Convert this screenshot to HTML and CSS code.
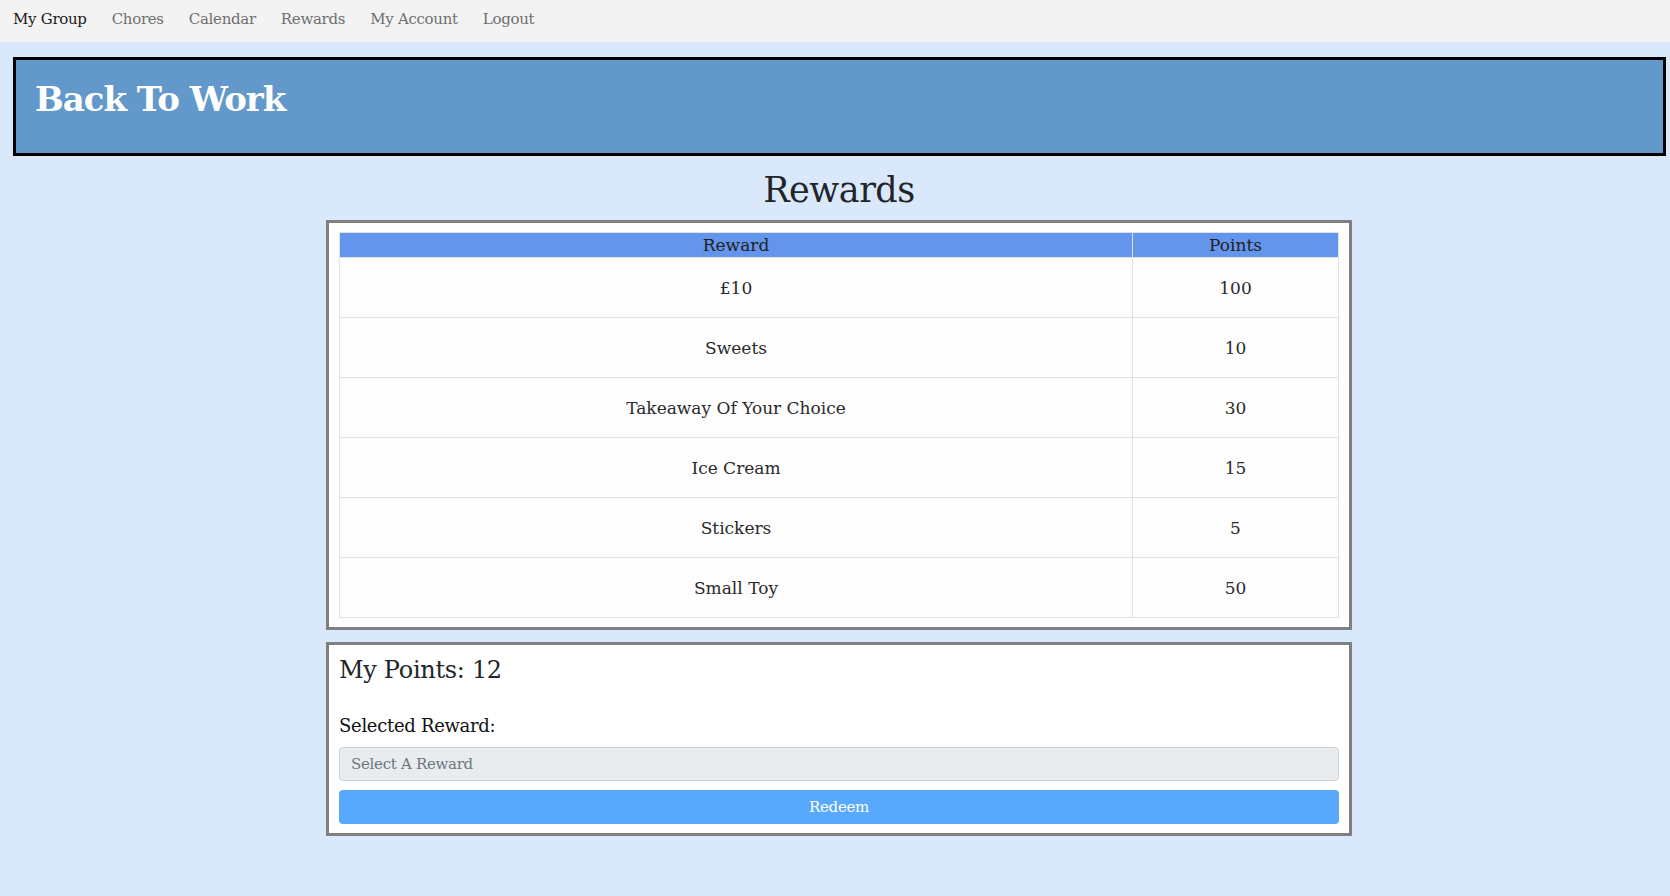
FILE: index.html
```html
<!DOCTYPE html>
<html lang="en">
<head>
<meta charset="utf-8">
<title>Rewards</title>
<link rel="stylesheet" href="styles.css">
</head>
<body>
<nav class="nav">
  <a class="nav-link active" href="#">My Group</a>
  <a class="nav-link" href="#">Chores</a>
  <a class="nav-link" href="#">Calendar</a>
  <a class="nav-link" href="#">Rewards</a>
  <a class="nav-link" href="#">My Account</a>
  <a class="nav-link" href="#">Logout</a>
</nav>
<header class="banner">
  <h1 class="banner-title">Back To Work</h1>
</header>
<main class="main">
  <h1 class="page-title">Rewards</h1>
  <section class="panel">
    <table class="rewards">
      <thead>
        <tr><th class="col-reward">Reward</th><th class="col-points">Points</th></tr>
      </thead>
      <tbody>
        <tr><td>£10</td><td>100</td></tr>
        <tr><td>Sweets</td><td>10</td></tr>
        <tr><td>Takeaway Of Your Choice</td><td>30</td></tr>
        <tr><td>Ice Cream</td><td>15</td></tr>
        <tr><td>Stickers</td><td>5</td></tr>
        <tr><td>Small Toy</td><td>50</td></tr>
      </tbody>
    </table>
  </section>
  <section class="panel redeem">
    <h3 class="points">My Points: 12</h3>
    <label class="field-label">Selected Reward:</label>
    <div class="select">Select A Reward</div>
    <button class="btn">Redeem</button>
  </section>
</main>
</body>
</html>
```
FILE: styles.css
```css
* { box-sizing: border-box; }
html, body { margin: 0; padding: 0; }
body {
  background: #dae8fb;
  font-family: "DejaVu Serif", "Liberation Serif", serif;
  color: #212529;
  width: 1670px;
  height: 896px;
  overflow: hidden;
}
.nav {
  background: #f3f3f3;
  height: 42px;
  display: flex;
  align-items: center;
  padding-left: 13px;
  padding-bottom: 4px;
  gap: 25px;
}
.nav-link {
  font-size: 15px;
  color: #6f6f6f;
  text-decoration: none;
  letter-spacing: -0.3px;
}
.nav-link.active { color: #1a1a1a; }
.banner {
  margin: 15px 4px 0 13px;
  height: 99px;
  background: #6399ca;
  border: 3px solid #000;
  padding: 19px 19px;
}
.banner-title {
  margin: 0;
  color: #fff;
  font-size: 34px;
  font-weight: 700;
  line-height: 1.2;
  letter-spacing: -1px;
}
.main {
  padding-left: 8px;
}
.page-title {
  margin: 12px 0 7px;
  text-align: center;
  font-size: 35px;
  font-weight: 400;
  line-height: 45px;
  letter-spacing: -0.5px;
}
.panel {
  width: 1026px;
  margin: 0 auto;
  background: #fff;
  border: 3px solid #808080;
  padding: 9px 10px;
}
.rewards {
  width: 100%;
  border-collapse: collapse;
}
.rewards th {
  background: #6495ed;
  font-weight: 400;
  font-size: 17px;
  height: 25px;
  padding: 0;
  border: 1px solid #dee2e6;
  text-align: center;
  color: #222;
}
.rewards .col-reward { width: 793px; }
.rewards td {
  height: 60px;
  text-align: center;
  font-size: 17px;
  border: 1px solid #dee2e6;
  background: #fdfdfe;
  color: #2a2a2a;
  padding: 0;
}
.redeem {
  margin-top: 12px;
  padding: 10px 10px 9px;
}
.points {
  margin: 0 0 29px;
  font-size: 24px;
  font-weight: 400;
  line-height: 30px;
  letter-spacing: -0.3px;
}
.field-label {
  display: block;
  font-size: 18px;
  line-height: 24px;
  margin-bottom: 9px;
  letter-spacing: -0.3px;
  color: #111;
}
.select {
  height: 34px;
  background: #e9ecef;
  border: 1px solid #ced4da;
  border-radius: 4px;
  padding: 0 11px;
  display: flex;
  align-items: center;
  color: #6c757d;
  font-size: 15px;
  letter-spacing: -0.3px;
}
.btn {
  display: block;
  width: 100%;
  height: 34px;
  margin-top: 9px;
  background: #58a9fe;
  border: none;
  border-radius: 4px;
  color: #fff;
  font-family: inherit;
  font-size: 15px;
  letter-spacing: -0.3px;
}
```
